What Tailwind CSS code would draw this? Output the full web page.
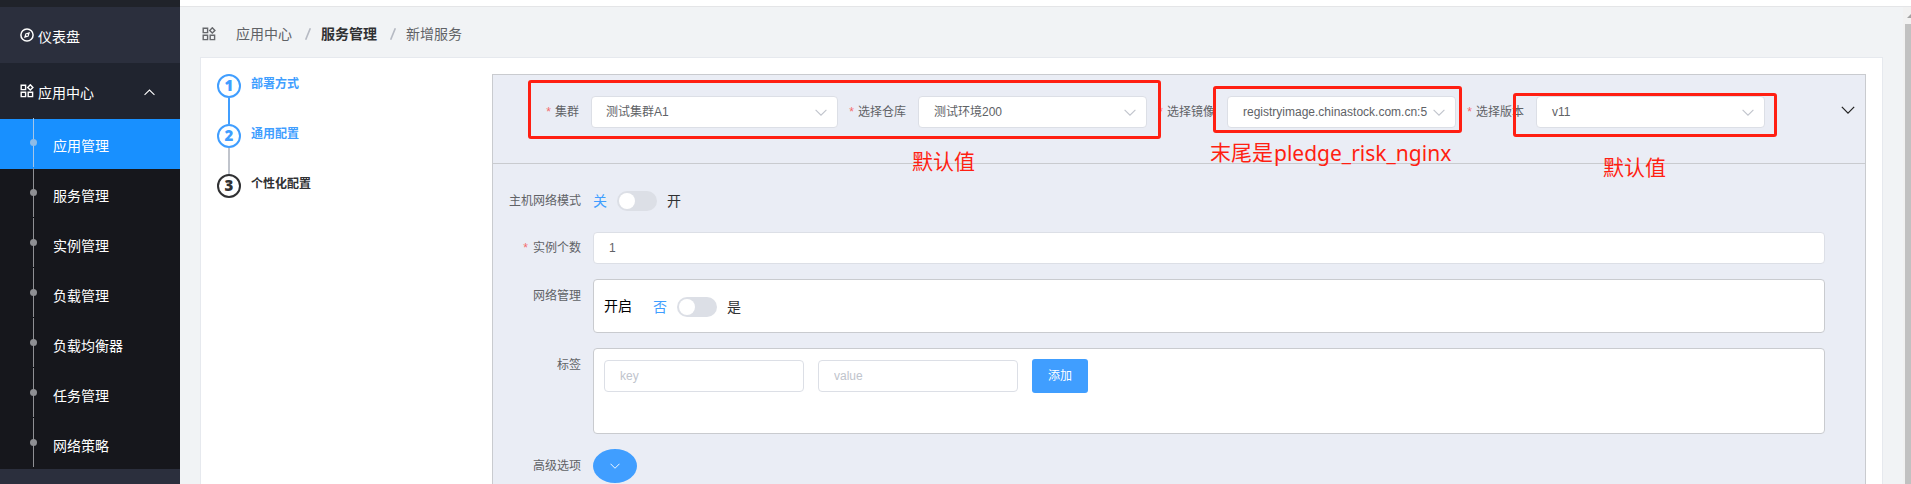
<!DOCTYPE html>
<html lang="zh-CN">
<head>
<meta charset="utf-8">
<title>新增服务</title>
<script src="https://cdn.jsdelivr.net/npm/@tailwindcss/browser@4"></script>
</head>
<body class="relative flex h-[484px] w-[1911px] overflow-hidden bg-white font-['Liberation_Sans','Noto_Sans_CJK_SC',sans-serif] text-xs leading-5 whitespace-nowrap text-[#606266]">

<svg class="hidden">
  <symbol id="down" viewBox="0 0 12 7"><path d="M.6 .8 6 6.2 11.4 .8" fill="none" stroke="currentColor" stroke-width="1.1"/></symbol>
  <symbol id="apps" viewBox="0 0 14 14"><g fill="none" stroke="currentColor" stroke-width="1.4"><path d="M1.2 1.2h4.4v4.4H1.2zM1.2 8.2h4.4v4.4H1.2zM8.2 8.2h4.4v4.4H8.2z"/><path d="m10.3.8 2.6 2.6-2.6 2.6-2.6-2.6z"/></g></symbol>
</svg>

<aside class="flex w-[180px] shrink-0 flex-col bg-[#2b2f3d] text-sm text-white">
  <div class="h-[7px] bg-[#20232a]"></div>
  <div class="flex h-14 items-center gap-1 pl-5">
    <svg class="size-3.5" viewBox="0 0 14 14" fill="none" stroke="currentColor" stroke-width="1.5"><circle cx="7" cy="7" r="6.1"/><path d="M10 4 8.6 8.6 4 10 5.4 5.4z" fill="currentColor" stroke="none"/><circle cx="7" cy="7" r=".9" fill="#2b2f3d" stroke="none"/></svg>
    <span class="pt-[3px]">仪表盘</span>
  </div>
  <div class="flex h-14 items-center gap-1 bg-[#20242f] pl-5">
    <svg class="size-3.5"><use href="#apps"/></svg>
    <span class="pt-[3px]">应用中心</span>
    <svg class="mt-0.5 mr-[25px] ml-auto h-[7px] w-[11px] rotate-180"><use href="#down"/></svg>
  </div>
  <nav class="bg-[#16171c]">
    <a class="relative flex h-[50px] items-center bg-[#1890ff] pt-1 pl-[53px]"><i class="absolute -top-px left-[33px] h-[49px] w-px bg-[#a5c6e8]"></i><i class="absolute top-5 left-[30px] size-[7px] rounded-full bg-[#8dbbe6]"></i>应用管理</a>
    <a class="relative flex h-[50px] items-center pt-1 pl-[53px]"><i class="absolute -top-px left-[33px] h-[49px] w-px bg-[#8f9094]"></i><i class="absolute top-5 left-[30px] size-[7px] rounded-full bg-[#8f9094]"></i>服务管理</a>
    <a class="relative flex h-[50px] items-center pt-1 pl-[53px]"><i class="absolute -top-px left-[33px] h-[49px] w-px bg-[#8f9094]"></i><i class="absolute top-5 left-[30px] size-[7px] rounded-full bg-[#8f9094]"></i>实例管理</a>
    <a class="relative flex h-[50px] items-center pt-1 pl-[53px]"><i class="absolute -top-px left-[33px] h-[49px] w-px bg-[#8f9094]"></i><i class="absolute top-5 left-[30px] size-[7px] rounded-full bg-[#8f9094]"></i>负载管理</a>
    <a class="relative flex h-[50px] items-center pt-1 pl-[53px]"><i class="absolute -top-px left-[33px] h-[49px] w-px bg-[#8f9094]"></i><i class="absolute top-5 left-[30px] size-[7px] rounded-full bg-[#8f9094]"></i>负载均衡器</a>
    <a class="relative flex h-[50px] items-center pt-1 pl-[53px]"><i class="absolute -top-px left-[33px] h-[49px] w-px bg-[#8f9094]"></i><i class="absolute top-5 left-[30px] size-[7px] rounded-full bg-[#8f9094]"></i>任务管理</a>
    <a class="relative flex h-[50px] items-center pt-1 pl-[53px]"><i class="absolute -top-px left-[33px] h-[49px] w-px bg-[#8f9094]"></i><i class="absolute top-5 left-[30px] size-[7px] rounded-full bg-[#8f9094]"></i>网络策略</a>
  </nav>
</aside>

<div class="flex min-w-0 flex-1 flex-col">
  <header class="h-[7px] shrink-0 border-b border-[#e4e5e7] bg-white"></header>
  <div class="flex min-h-0 flex-1 bg-[#f1f3f5]">
    <main class="flex w-[1723px] shrink-0 flex-col pr-5 pl-5">
      <div class="flex h-[50px] shrink-0 items-center pt-1 pl-0.5 text-sm">
        <svg class="size-3.5 text-[#66686c]"><use href="#apps"/></svg>
        <span class="ml-5">应用中心</span>
        <svg class="ml-[13px] h-3 w-1.5" viewBox="0 0 6 12"><path d="M5.3.3.7 11.7" stroke="#b6bac3" stroke-width="1.6"/></svg>
        <span class="ml-[10px] font-bold text-[#303133]">服务管理</span>
        <svg class="ml-[13px] h-3 w-1.5" viewBox="0 0 6 12"><path d="M5.3.3.7 11.7" stroke="#b6bac3" stroke-width="1.6"/></svg>
        <span class="ml-[10px]">新增服务</span>
      </div>

      <div class="flex min-h-0 flex-1 border border-b-0 border-[#e6e9ee] bg-white pt-4 pr-4 pl-4">
        <ol class="w-[275px] shrink-0 font-bold">
          <li class="flex h-[50px] gap-[10px] text-[#409eff]">
            <div class="flex w-6 flex-col items-center"><b class="flex size-6 shrink-0 items-center justify-center rounded-full border-2 border-[#409eff] pb-0.5 font-['Noto_Sans'] text-[15px]">1</b><i class="w-0.5 flex-1 bg-[#409eff]"></i></div>
            <span>部署方式</span>
          </li>
          <li class="flex h-[50px] gap-[10px] text-[#409eff]">
            <div class="flex w-6 flex-col items-center"><b class="flex size-6 shrink-0 items-center justify-center rounded-full border-2 border-[#409eff] pb-0.5 font-['Noto_Sans'] text-[15px]">2</b><i class="w-0.5 flex-1 bg-[#c0c4cc]"></i></div>
            <span>通用配置</span>
          </li>
          <li class="flex gap-[10px] text-[#303133]">
            <b class="flex size-6 shrink-0 items-center justify-center rounded-full border-2 border-[#303133] pb-0.5 font-['Noto_Sans'] text-[15px]">3</b>
            <span>个性化配置</span>
          </li>
        </ol>

        <section class="flex min-w-0 flex-1 flex-col border border-b-0 border-[#c9cbcf] bg-[#eaedf5]">
          <div class="flex h-[89px] shrink-0 items-start border-b border-[#c9cbcf] pt-[21px]">
            <label class="flex h-8 w-[98px] items-center justify-end gap-1 pr-3"><span class="text-[#f56c6c]">*</span>集群</label>
            <div class="flex h-8 w-[247px] items-center justify-between rounded border border-[#dcdfe6] bg-white pr-[10px] pl-[14px]">测试集群A1<svg class="h-[7px] w-3 text-[#c0c4cc]"><use href="#down"/></svg></div>
            <label class="flex h-8 w-20 items-center justify-end gap-1 pr-3"><span class="text-[#f56c6c]">*</span>选择仓库</label>
            <div class="flex h-8 w-[229px] items-center justify-between rounded border border-[#dcdfe6] bg-white pr-[10px] pl-[15px]">测试环境200<svg class="h-[7px] w-3 text-[#c0c4cc]"><use href="#down"/></svg></div>
            <label class="flex h-8 w-20 items-center justify-end gap-1 pr-3"><span class="text-[#f56c6c]">*</span>选择镜像</label>
            <div class="flex h-8 w-[229px] items-center justify-between rounded border border-[#dcdfe6] bg-white pr-[10px] pl-[15px]"><span>registryimage.chinastock.com.cn:5</span><svg class="h-[7px] w-3 text-[#c0c4cc]"><use href="#down"/></svg></div>
            <label class="flex h-8 w-20 items-center justify-end gap-1 pr-3"><span class="text-[#f56c6c]">*</span>选择版本</label>
            <div class="flex h-8 w-[229px] items-center justify-between rounded border border-[#dcdfe6] bg-white pr-[10px] pl-[15px]">v11<svg class="h-[7px] w-3 text-[#c0c4cc]"><use href="#down"/></svg></div>
            <svg class="mt-[10px] mr-[10px] ml-auto h-2 w-3.5 text-[#222]"><use href="#down"/></svg>
          </div>

          <div class="flex flex-col pt-[21px] pr-10">
            <div class="flex h-8 items-center">
              <label class="w-[100px] pr-3 text-right">主机网络模式</label>
              <span class="text-sm text-[#409eff]">关</span>
              <div class="mx-[10px] h-5 w-10 rounded-full bg-[#dcdfe6] p-0.5"><div class="size-4 rounded-full bg-white"></div></div>
              <span class="text-sm text-[#303133]">开</span>
            </div>
            <div class="mt-[15px] flex h-8">
              <label class="flex w-[100px] items-center justify-end gap-[5px] pr-3"><span class="text-[#f56c6c]">*</span>实例个数</label>
              <div class="flex flex-1 items-center rounded border border-[#dcdfe6] bg-white pl-[15px]">1</div>
            </div>
            <div class="mt-[15px] flex h-[54px]">
              <label class="h-8 w-[100px] pr-3 text-right leading-[34px]">网络管理</label>
              <div class="flex flex-1 items-center rounded border border-[#c9cbcf] bg-white pt-0.5 pl-[10px] text-sm">
                <span class="mr-[21px] -mt-0.5 text-black">开启</span>
                <span class="text-[#409eff]">否</span>
                <div class="mx-[10px] h-5 w-10 rounded-full bg-[#dcdfe6] p-0.5"><div class="size-4 rounded-full bg-white"></div></div>
                <span class="text-[#303133]">是</span>
              </div>
            </div>
            <div class="mt-[15px] flex h-[86px]">
              <label class="h-8 w-[100px] pr-3 text-right leading-[34px]">标签</label>
              <div class="flex flex-1 items-start gap-3.5 rounded border border-[#c9cbcf] bg-white pt-[10px] pl-[10px]">
                <input class="mt-px h-8 w-[200px] rounded border border-[#dcdfe6] px-[15px] placeholder:text-[#c0c4cc]" placeholder="key">
                <input class="mt-px h-8 w-[200px] rounded border border-[#dcdfe6] px-[15px] placeholder:text-[#c0c4cc]" placeholder="value">
                <button class="h-[34px] w-14 rounded-[3px] bg-[#409eff] text-white">添加</button>
              </div>
            </div>
            <div class="mt-[15px] flex h-[34px]">
              <label class="h-8 w-[100px] pr-3 text-right leading-[34px]">高级选项</label>
              <button class="flex h-[34px] w-11 items-center justify-center rounded-[50%] bg-[#409eff] text-white"><svg class="h-1.5 w-[10px]"><use href="#down"/></svg></button>
            </div>
          </div>
        </section>
      </div>
    </main>
    <div class="flex flex-1 flex-col bg-[#f1f1f1] pl-0.5">
      <svg class="h-[17px] w-1.5 shrink-0" viewBox="0 0 6 17"><path d="M2 11 6 7v4z" fill="#a3a3a3"/></svg>
      <div class="w-full flex-1 bg-[#c1c1c1]"></div>
    </div>
  </div>
</div>

<!-- review annotations over the form -->
<div class="absolute top-20 left-[528px] h-[59px] w-[633px] rounded-[3px] border-3 border-[#ff1f12]"></div>
<div class="absolute top-[86px] left-[1213px] h-[47px] w-[249px] rounded-[3px] border-3 border-[#ff1f12]"></div>
<div class="absolute top-[93px] left-[1513px] h-[44px] w-[264px] rounded-[3px] border-3 border-[#ff1f12]"></div>
<div class="absolute top-[147px] left-[912px] text-[21px] leading-[30px] text-[#ff1f12]">默认值</div>
<div class="absolute top-[138px] left-[1210px] flex text-[21px] leading-[30px] text-[#ff1f12]">末尾是<span class="pl-px font-['Noto_Sans']">pledge_risk_nginx</span></div>
<div class="absolute top-[153px] left-[1603px] text-[21px] leading-[30px] text-[#ff1f12]">默认值</div>
</body>
</html>
